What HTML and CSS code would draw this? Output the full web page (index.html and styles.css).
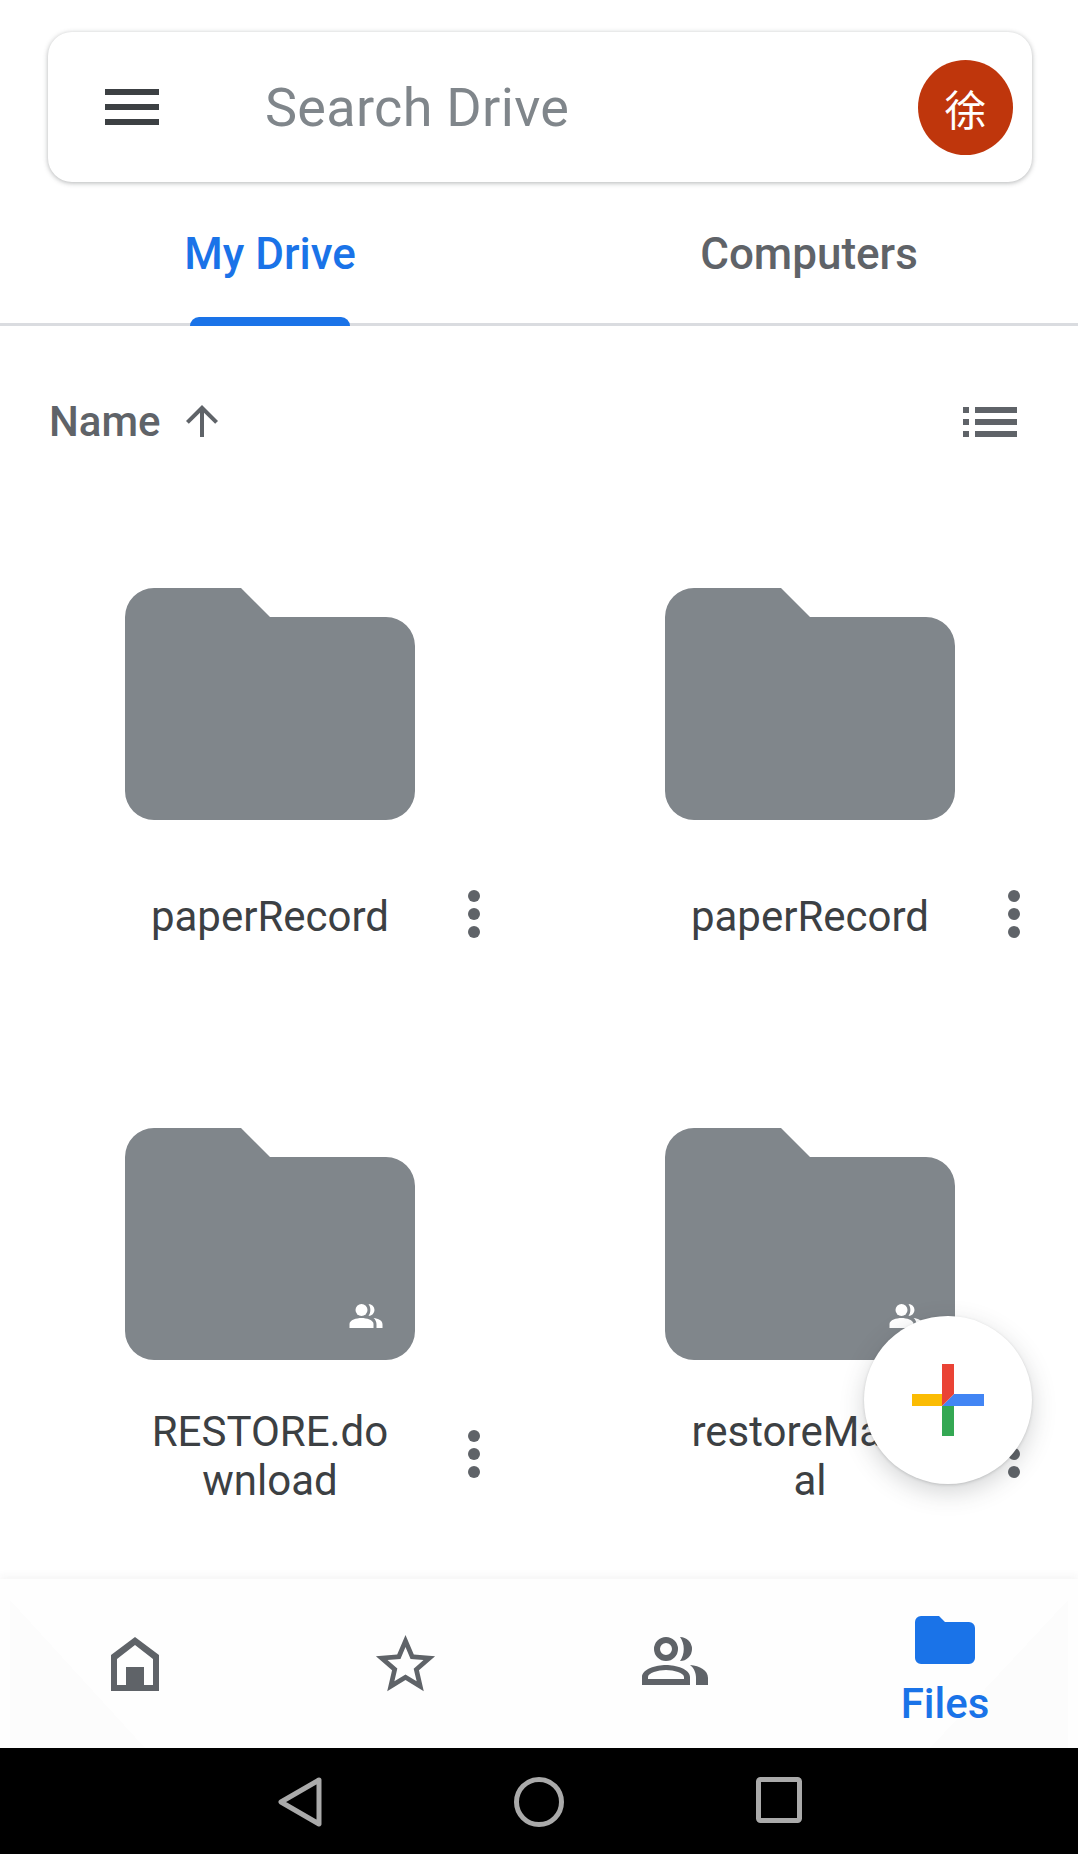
FILE: index.html
```html
<!DOCTYPE html>
<html lang="en">
<head>
    <meta charset="UTF-8">
    <meta name="viewport" content="width=device-width, initial-scale=1.0">
    <title>My Drive</title>
    <link rel="stylesheet" href="styles.css">
</head>
<body>

<svg class="defs" width="0" height="0">
    <symbol id="folder" viewBox="0 0 290 232">
        <path d="M29 0H116L145 29H261A29 29 0 0 1 290 58V203A29 29 0 0 1 261 232H29A29 29 0 0 1 0 203V29A29 29 0 0 1 29 0Z"/>
    </symbol>
    <symbol id="shared" viewBox="0 0 66 48">
        <circle cx="24" cy="12" r="12"/>
        <path d="M0 48V40C0 32 14 28 24 28S48 32 48 40V48Z"/>
        <path d="M38 0A12 12 0 1 1 38 24C43 17 43 7 38 0Z"/>
        <path d="M48 28C58 29 66 33 66 41V48H54V41C54 36 52 31 48 28Z"/>
    </symbol>
    <symbol id="dots" viewBox="0 0 12 48">
        <circle cx="6" cy="6" r="6"/>
        <circle cx="6" cy="24" r="6"/>
        <circle cx="6" cy="42" r="6"/>
    </symbol>
</svg>

<div class="app">
    <header class="search-bar">
        <div class="menu-icon"><span></span><span></span><span></span></div>
        <div class="search-text">Search Drive</div>
        <div class="avatar">徐</div>
    </header>

    <nav class="tabs">
        <div class="tab active">My Drive<span class="indicator"></span></div>
        <div class="tab">Computers</div>
    </nav>

    <main class="main">
        <div class="toolbar">
            <div class="sort">
                <span>Name</span>
                <svg class="arrow" viewBox="0 0 24 24"><path d="M4 12l1.41 1.41L11 7.83V20h2V7.83l5.58 5.59L20 12l-8-8-8 8z"/></svg>
            </div>
            <div class="list-icon">
                <span></span><span></span><span></span>
            </div>
        </div>

        <div class="grid">
            <div class="item">
                <div class="thumb"><svg class="folder"><use href="#folder"/></svg></div>
                <div class="foot">
                    <div class="name">paperRecord</div>
                    <svg class="more"><use href="#dots"/></svg>
                </div>
            </div>
            <div class="item">
                <div class="thumb"><svg class="folder"><use href="#folder"/></svg></div>
                <div class="foot">
                    <div class="name">paperRecord</div>
                    <svg class="more"><use href="#dots"/></svg>
                </div>
            </div>
            <div class="item">
                <div class="thumb">
                    <svg class="folder"><use href="#folder"/></svg>
                    <svg class="shared"><use href="#shared"/></svg>
                </div>
                <div class="foot">
                    <div class="name">RESTORE.download</div>
                    <svg class="more"><use href="#dots"/></svg>
                </div>
            </div>
            <div class="item">
                <div class="thumb">
                    <svg class="folder"><use href="#folder"/></svg>
                    <svg class="shared"><use href="#shared"/></svg>
                </div>
                <div class="foot">
                    <div class="name">restoreManual</div>
                    <svg class="more"><use href="#dots"/></svg>
                </div>
            </div>
        </div>

        <div class="fab">
            <svg viewBox="0 0 72 72" width="72" height="72">
                <path fill="#fbbc04" d="M0 30H30V42H0Z"/>
                <path fill="#34a853" d="M30 42H42V72H30Z"/>
                <path fill="#4285f4" d="M42 30H72V42H30Z"/>
                <path fill="#ea4335" d="M30 0H42V30L30 42Z"/>
            </svg>
        </div>
    </main>

    <nav class="bottom-nav">
        <div class="nav-item">
            <svg width="48" height="54" viewBox="0 0 48 54" class="nav-icon">
                <path fill-rule="evenodd" d="M24 0L48 18V54H0V18ZM24 8L6 22V48H15V30H33V48H42V22Z"/>
            </svg>
        </div>
        <div class="nav-item">
            <svg width="71" height="71" viewBox="0 0 24 24" class="nav-icon star">
                <path d="M22 9.24l-7.19-.62L12 2 9.19 8.63 2 9.24l5.46 4.73L5.82 21 12 17.27 18.18 21l-1.63-7.03L22 9.24zM12 15.4l-3.76 2.27 1-4.28-3.32-2.88 4.38-.38L12 6.1l1.71 4.04 4.38.38-3.32 2.88 1 4.28L12 15.4z"/>
            </svg>
        </div>
        <div class="nav-item">
            <svg width="66" height="48" viewBox="0 0 66 48" class="nav-icon">
                <path fill-rule="evenodd" d="M24 0A12 12 0 1 1 24 24A12 12 0 1 1 24 0ZM24 6A6 6 0 1 0 24 18A6 6 0 1 0 24 6Z"/>
                <path fill-rule="evenodd" d="M0 48V40C0 32 14 28 24 28S48 32 48 40V48ZM6 42H42V40C42 36 32 33 24 33S6 36 6 40Z"/>
                <path d="M38 0A12 12 0 1 1 38 24C43 17 43 7 38 0Z"/>
                <path d="M48 28C58 29 66 33 66 41V48H54V41C54 36 52 31 48 28Z"/>
            </svg>
        </div>
        <div class="nav-item active">
            <svg width="60" height="48" viewBox="0 0 60 48" class="nav-icon">
                <path d="M6 0H24L30 6H54A6 6 0 0 1 60 12V42A6 6 0 0 1 54 48H6A6 6 0 0 1 0 42V6A6 6 0 0 1 6 0Z"/>
            </svg>
            <span class="nav-label">Files</span>
        </div>
    </nav>

    <footer class="system-bar">
        <svg width="44" height="50" viewBox="0 0 44 50" class="sys-icon"><path d="M41 3L3 25L41 47Z"/></svg>
        <svg width="50" height="50" viewBox="0 0 50 50" class="sys-icon"><circle cx="25" cy="25" r="22.5"/></svg>
        <svg width="46" height="46" viewBox="0 0 46 46" class="sys-icon"><rect x="2.5" y="2.5" width="41" height="41" rx="2"/></svg>
    </footer>
</div>

</body>
</html>
```

FILE: styles.css
```css
* {
    box-sizing: border-box;
}
body {
    margin: 0;
    background-color: #ffffff;
    font-family: 'Roboto', sans-serif;
}
.defs {
    position: absolute;
}
.app {
    width: 1078px;
    height: 1854px;
    display: flex;
    flex-direction: column;
    overflow: hidden;
}

/* search */
.search-bar {
    height: 150px;
    margin: 32px 46px 0 48px;
    padding: 0 19px 0 57px;
    display: flex;
    align-items: center;
    border-radius: 24px;
    background-color: #ffffff;
    box-shadow: 0 1px 5px rgba(60, 64, 67, 0.4);
}
.menu-icon {
    width: 54px;
    display: flex;
    flex-direction: column;
    gap: 9px;
}
.menu-icon span {
    height: 6px;
    background-color: #3c4043;
}
.search-text {
    flex: 1;
    margin-left: 106px;
    font-size: 54px;
    letter-spacing: 0.3px;
    color: #80868b;
}
.avatar {
    width: 95px;
    height: 95px;
    border-radius: 50%;
    background-color: #bf360c;
    color: #ffffff;
    font-family: 'Noto Sans CJK SC', sans-serif;
    font-size: 42px;
    display: flex;
    align-items: center;
    justify-content: center;
}

/* tabs */
.tabs {
    height: 144px;
    display: grid;
    grid-template-columns: 540px 538px;
    border-bottom: 3px solid #dadce0;
}
.tab {
    position: relative;
    padding-top: 48px;
    text-align: center;
    font-size: 44px;
    font-weight: 500;
    line-height: 48px;
    color: #5f6368;
}
.tab.active {
    color: #1a73e8;
}
.indicator {
    position: absolute;
    left: 50%;
    bottom: -3px;
    width: 160px;
    height: 9px;
    margin-left: -80px;
    border-radius: 9px 9px 0 0;
    background-color: #1a73e8;
}

/* sort row */
.main {
    position: relative;
    flex: 1;
}
.toolbar {
    height: 262px;
    padding: 71px 61px 0 49px;
    display: flex;
    justify-content: space-between;
    align-items: flex-start;
}
.sort {
    height: 48px;
    display: flex;
    align-items: center;
    font-size: 42px;
    font-weight: 500;
    color: #5f6368;
}
.arrow {
    width: 48px;
    height: 48px;
    margin-left: 17px;
    fill: #5f6368;
}
.list-icon {
    width: 54px;
    margin-top: 10px;
    display: flex;
    flex-direction: column;
    gap: 6px;
}
.list-icon span {
    height: 6px;
    background: linear-gradient(to right, #5f6368 6px, transparent 6px, transparent 12px, #5f6368 12px);
}

/* folders */
.grid {
    display: grid;
    grid-template-columns: 540px 538px;
    row-gap: 163px;
}
.item {
    width: 540px;
}
.thumb {
    position: relative;
    width: 290px;
    height: 232px;
    margin: 0 auto 47px;
}
.folder {
    display: block;
    width: 290px;
    height: 232px;
    fill: #80868b;
}
.shared {
    position: absolute;
    right: 32px;
    bottom: 32px;
    width: 34px;
    height: 24px;
    fill: #ffffff;
}
.foot {
    height: 98px;
    display: grid;
    grid-template-columns: 145px 250px 145px;
    align-items: center;
}
.name {
    grid-column: 2;
    text-align: center;
    word-break: break-all;
    font-size: 42px;
    line-height: 49px;
    color: #3c4043;
}
.more {
    width: 12px;
    height: 48px;
    margin: -4px 0 0 73px;
    fill: #5f6368;
}
.fab {
    position: absolute;
    right: 46px;
    top: 990px;
    width: 168px;
    height: 168px;
    border-radius: 50%;
    background-color: #ffffff;
    display: flex;
    align-items: center;
    justify-content: center;
    box-shadow: 0 8px 24px rgba(60, 64, 67, 0.22), 0 1px 3px rgba(60, 64, 67, 0.2);
}

/* bottom nav */
.bottom-nav {
    height: 169px;
    display: grid;
    grid-template-columns: repeat(4, 270px);
    background-color: #fefefe;
    background-image:
        linear-gradient(to top right, #fcfcfc 50%, transparent 50%),
        linear-gradient(to top left, #fcfcfc 50%, transparent 50%);
    background-repeat: no-repeat;
    background-size: 135px 148px, 138px 148px;
    background-position: 10px 21px, 930px 21px;
    box-shadow: 0 -3px 8px rgba(60, 64, 67, 0.05);
}
.nav-item {
    display: flex;
    flex-direction: column;
    align-items: center;
    padding-top: 58px;
}
.nav-icon {
    fill: #5f6368;
}
.nav-item .star {
    margin-top: -8px;
}
.nav-item.active {
    padding-top: 37px;
}
.nav-item.active .nav-icon {
    fill: #1a73e8;
}
.nav-label {
    margin-top: 18px;
    font-size: 42px;
    line-height: 44px;
    font-weight: 500;
    color: #1a73e8;
}

/* android buttons */
.system-bar {
    height: 106px;
    padding: 29px 276px 0 278px;
    background-color: #000000;
    display: flex;
    justify-content: space-between;
    align-items: flex-start;
}
.sys-icon {
    fill: none;
    stroke: #aaaaaa;
    stroke-width: 5;
    stroke-linejoin: round;
}
```
